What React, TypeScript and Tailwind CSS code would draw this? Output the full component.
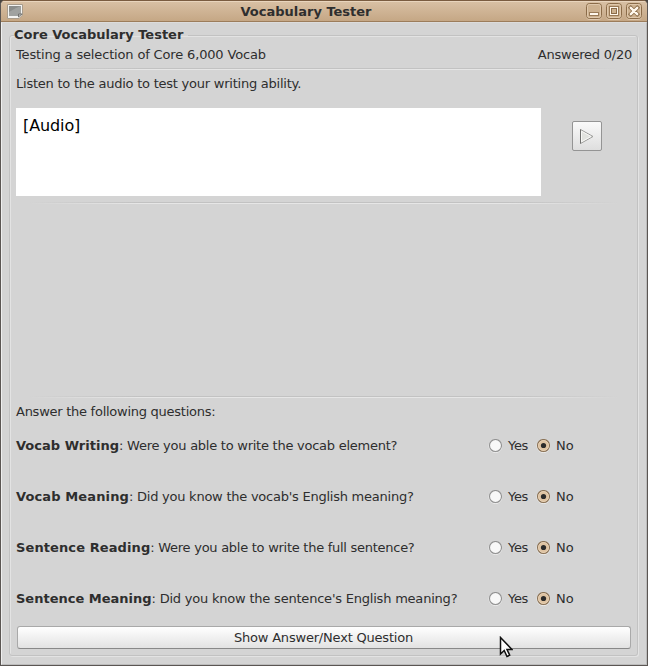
import React from "react";

const questions = [
  { label: "Vocab Writing", text: "Were you able to write the vocab element?", bold: "tracking-[0.02px]", body: "tracking-[-0.25px]" },
  { label: "Vocab Meaning", text: "Did you know the vocab's English meaning?", bold: "tracking-[0.12px]", body: "tracking-[-0.24px]" },
  { label: "Sentence Reading", text: "Were you able to write the full sentence?", bold: "tracking-[0.1px]", body: "tracking-[-0.27px]" },
  { label: "Sentence Meaning", text: "Did you know the sentence's English meaning?", bold: "tracking-[0px]", body: "tracking-[-0.21px]" },
];

function WindowIcon() {
  return (
    <svg width="16" height="15" viewBox="0 0 16 15" className="ml-[6px] mt-[3px] shrink-0">
      <path d="M0.5 0.5H15.5V11L12 14.5H0.5Z" fill="#f4f4f2" stroke="#a89c8c" />
      <path d="M2 2H14V10L11 12H2Z" fill="#8b8d8b" />
      <path d="M2 8L9 4L14 2V10L11 12H2Z" fill="#a0a2a0" />
      <path d="M11.5 13V10H15Z" fill="#c4c4c2" stroke="#6d6d6b" strokeWidth="0.9" />
    </svg>
  );
}

function WindowButton({ kind }: { kind: "min" | "max" | "close" }) {
  return (
    <svg width="16" height="17" viewBox="0 0 16 17">
      <rect x="0.5" y="1.5" width="15" height="15" rx="3" fill="none" stroke="#ead7c0" strokeOpacity="0.7" />
      <rect x="0.5" y="0.5" width="15" height="15" rx="3" fill="#cdb18f" stroke="#8b6c49" />
      <rect x="1.5" y="1.5" width="13" height="13" rx="2" fill="none" stroke="#dfc8ac" />
      {kind === "min" && (
        <>
          <rect x="3" y="9" width="10" height="4" fill="#9a7b58" />
          <rect x="4" y="10" width="8" height="2" fill="#fff8ed" />
        </>
      )}
      {kind === "max" && (
        <>
          <rect x="3" y="3" width="10" height="10" fill="#9a7b58" />
          <rect x="4" y="4" width="8" height="8" fill="#fff8ed" />
          <rect x="5.5" y="5.5" width="5" height="5" fill="#cdb18f" stroke="#8b6c49" />
        </>
      )}
      {kind === "close" && (
        <>
          <path d="M4.8 4.8L11.2 11.2M11.2 4.8L4.8 11.2" stroke="#8b6c49" strokeWidth="4" strokeLinecap="square" />
          <path d="M4.8 4.8L11.2 11.2M11.2 4.8L4.8 11.2" stroke="#fff8ed" strokeWidth="2.4" strokeLinecap="round" />
        </>
      )}
    </svg>
  );
}

function Radio({ checked }: { checked?: boolean }) {
  return (
    <svg width="14" height="14" viewBox="0 0 14 14" className="shrink-0">
      <circle cx="7.5" cy="7.1" r="6.5" fill="none" stroke="#ececec" />
      <circle cx="7.5" cy="6.5" r="6" fill={checked ? "#dec3a2" : "#f8f8f8"} stroke={checked ? "#8a7358" : "#929292"} strokeWidth="1.1" />
      {checked && <circle cx="7.5" cy="6.5" r="5" fill="none" stroke="#ead4ba" strokeWidth="0.8" />}
      {checked && <circle cx="7.5" cy="6.5" r="2.6" fill="#2b2b2b" />}
    </svg>
  );
}

function Separator() {
  return (
    <div className="h-[2px]">
      <div className="h-px bg-[linear-gradient(to_right,transparent_2%,#c2c2c2_20%,#c2c2c2_80%,transparent_98%)]" />
      <div className="h-px bg-[linear-gradient(to_right,transparent_2%,#e6e6e6_20%,#e6e6e6_80%,transparent_98%)]" />
    </div>
  );
}

export default function App() {
  return (
    <div className="h-[666px] w-[648px] bg-[#484440] font-['DejaVu_Sans',sans-serif] text-[13px] leading-4 text-[#2e2e2e]">
      <div className="flex h-full flex-col overflow-hidden rounded-t-[5px] border border-[#5b5653] border-t-[#7a5c40] bg-[#d4d4d4]">
        <header className="flex h-[21px] shrink-0 border-b border-[#9c7d5b] bg-linear-to-b from-[#d9c1a5] to-[#c5a785] shadow-[inset_0_1px_#e9d5bd]">
          <WindowIcon />
          <h1 className="flex-1 pl-[3px] pt-[3px] text-center font-bold">Vocabulary Tester</h1>
          <div className="mr-[5px] mt-[2px] flex gap-1">
            <WindowButton kind="min" />
            <WindowButton kind="max" />
            <WindowButton kind="close" />
          </div>
        </header>
        <div className="flex-1 border border-b-[#bcbcbc] border-l-[#efefef] border-r-[#bcbcbc] border-t-[#dcdcdc] pl-[7px] pr-[9px] pt-[3px]">
          <fieldset className="h-[630px] rounded-[3px] border border-[#c2c2c2] px-[6px] shadow-[1px_1px_#e3e3e3,inset_1px_1px_#e3e3e3]">
            <legend className="-ml-[2px] h-[18px] pr-[5px] pt-px font-bold">Core Vocabulary Tester</legend>
            <div className="-mr-px flex h-[24px] justify-between pt-[3px]">
              <span className="tracking-[-0.155px]">Testing a selection of Core 6,000 Vocab</span>
              <span className="tracking-[-0.23px]">Answered 0/20</span>
            </div>
            <Separator />
            <p className="h-[38px] pt-[6px] tracking-[-0.235px]">Listen to the audio to test your writing ability.</p>
            <div className="flex h-[94px]">
              <div className="h-[88px] w-[525px] bg-white px-[7px] pt-[9px] text-[16px] leading-[18px] tracking-[-0.1px] text-black">[Audio]</div>
              <button className="ml-[31px] mt-[13px] flex h-[30px] w-[30px] items-center justify-center rounded-[2px] border border-[#949494] bg-linear-to-b from-[#fafafa] to-[#dedede]">
                <svg width="16" height="17" viewBox="0 0 16 17">
                  <path d="M1.5 1.5V15.5L14 8.5Z" fill="#e2e3df" stroke="#9a9a98" />
                  <path d="M1.5 15.5V1.5" stroke="#6f6f6d" />
                  <path d="M2.5 3.2V13.8L12 8.5Z" fill="none" stroke="#f8f8f6" />
                </svg>
              </button>
            </div>
            <Separator />
            <div className="h-[192px]" />
            <Separator />
            <p className="h-[22px] pt-[6px] tracking-[-0.26px]">Answer the following questions:</p>
            {questions.map((q) => (
              <div key={q.label} className="flex h-[51px] items-center">
                <span className="w-[472px] whitespace-nowrap">
                  <b className={q.bold}>{q.label}</b>
                  <span className={q.body}>: {q.text}</span>
                </span>
                <Radio />
                <span className="ml-[6px] w-[28px] tracking-[-0.3px]">Yes</span>
                <Radio checked />
                <span className="ml-[6px]">No</span>
              </div>
            ))}
            <button className="ml-px mt-[2px] h-[23px] w-[614px] rounded-[3px] border border-[#a9a9a9] border-b-[#888] bg-linear-to-b from-white to-[#e2e2e2] pr-px tracking-[-0.2px]">
              Show Answer/Next Question
            </button>
          </fieldset>
        </div>
      </div>
      <svg width="14" height="22" viewBox="0 0 14 22" className="absolute left-[499px] top-[636px]">
        <path d="M1.5 1.5V18L5.2 14.5L8 20.5L10.7 19.2L8 13.5H13Z" fill="#fff" stroke="#111" strokeWidth="1.5" />
      </svg>
    </div>
  );
}
